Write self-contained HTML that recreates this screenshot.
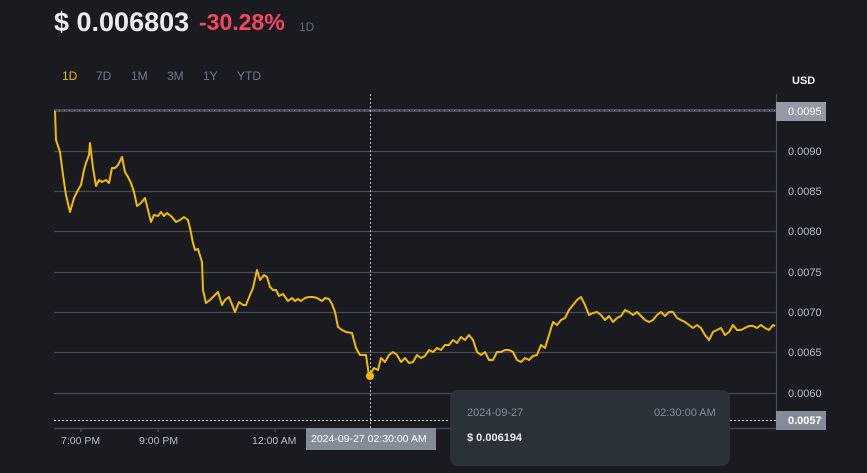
<!DOCTYPE html>
<html><head><style>
body{margin:0;width:867px;height:473px;background:#1a1b20;overflow:hidden;font-family:"Liberation Sans",sans-serif;position:relative}
.t{position:absolute;white-space:nowrap}
</style></head><body>
<div class="t" style="left:54px;top:7px;font-size:27px;font-weight:bold;color:#eaecef">$ 0.006803</div>
<div class="t" style="left:199px;top:9px;font-size:23px;font-weight:bold;color:#f6465d">-30.28%</div>
<div class="t" style="left:299px;top:20px;font-size:12px;color:#5e6673">1D</div>
<div class="t" style="left:62px;top:69px;font-size:12px;color:#f0b90b">1D</div>
<div class="t" style="left:96px;top:69px;font-size:12px;color:#707a8a">7D</div>
<div class="t" style="left:131px;top:69px;font-size:12px;color:#707a8a">1M</div>
<div class="t" style="left:167px;top:69px;font-size:12px;color:#707a8a">3M</div>
<div class="t" style="left:203px;top:69px;font-size:12px;color:#707a8a">1Y</div>
<div class="t" style="left:237px;top:69px;font-size:12px;color:#707a8a">YTD</div>
<div class="t" style="left:792px;top:75px;font-size:11px;font-weight:bold;color:#eaecef">USD</div>
<svg width="867" height="473" style="position:absolute;left:0;top:0">
<g stroke="#474d57" stroke-width="1.2">
<line x1="54" y1="151.5" x2="776" y2="151.5"/><line x1="54" y1="191.5" x2="776" y2="191.5"/>
<line x1="54" y1="231.5" x2="776" y2="231.5"/><line x1="54" y1="272.5" x2="776" y2="272.5"/>
<line x1="54" y1="312.5" x2="776" y2="312.5"/><line x1="54" y1="352.5" x2="776" y2="352.5"/>
<line x1="54" y1="393.5" x2="776" y2="393.5"/><line x1="54" y1="428.5" x2="776" y2="428.5"/>
<line x1="776.5" y1="94" x2="776.5" y2="428"/>
<line x1="81" y1="428" x2="81" y2="432"/><line x1="158" y1="428" x2="158" y2="432"/><line x1="275" y1="428" x2="275" y2="432"/>
</g>
<rect x="54" y="109" width="722" height="3" fill="#4a4d55"/>
<line x1="54" y1="110.5" x2="776" y2="110.5" stroke="#8a8f99" stroke-width="1" stroke-dasharray="1 4"/>
<line x1="54" y1="420.5" x2="776" y2="420.5" stroke="#d0d4dc" stroke-width="1" stroke-dasharray="2 2"/>
<line x1="370.5" y1="94" x2="370.5" y2="428" stroke="#b7bdc6" stroke-width="1" stroke-dasharray="2 2"/>
<polyline fill="none" stroke="#f0b90b" stroke-width="2" stroke-linejoin="round" points="55,111 56,140 60,152 63,175 66,195 70,212 74,198 78,190 81,185 84,170 86,163 89,155 90,143 93,168 96,186 99,180 102,182 106,180 109,183 112,168 115,168 118,165 122,157 125,172 128,177 131,183 134,192 137,206 141,203 145,198 148,210 151,222 154,215 158,216 161,212 164,216 167,213 172,217 176,222 180,220 184,217 188,220 190,228 193,243 195,250 198,249 202,262 203,290 206,303 210,300 214,296 218,292 222,305 225,300 229,297 235,312 239,302 243,305 246,305 250,295 253,288 257,270 260,280 264,275 267,277 270,287 273,290 276,290 279,296 283,294 288,301 292,298 295,301 298,299 301,301 305,298 309,297 313,297 317,298 322,301 325,298 329,299 332,304 335,312 338,327 342,330 346,332 352,333 356,348 360,355 366,355 369,376 374,368 378,370 381,358 385,362 389,355 393,352 397,355 401,362 405,358 409,363 413,362 417,355 421,358 425,356 429,350 433,352 437,348 441,350 445,345 449,345 453,340 457,343 461,337 465,340 469,335 473,340 477,352 481,355 485,352 489,360 493,360 497,352 501,352 505,350 509,350 513,352 517,360 521,362 525,358 529,360 533,356 537,355 541,345 545,348 549,335 553,322 557,325 561,320 565,318 569,310 573,305 577,300 581,297 585,305 589,315 593,313 597,312 601,315 605,320 609,316 613,322 617,318 621,316 625,310 629,312 633,315 637,312 641,316 645,320 649,322 653,320 657,315 661,312 665,316 669,312 673,312 677,318 681,320 685,322 689,325 693,328 697,325 701,328 705,335 709,340 713,332 717,330 721,328 725,335 729,332 733,325 737,330 741,330 745,328 749,326 753,326 757,328 761,325 765,328 769,330 773,325 775,326"/>
<circle cx="370" cy="376" r="4" fill="#f0b90b"/>
<rect x="776" y="102" width="50" height="19" fill="#959ba6"/>
<rect x="776" y="411" width="50" height="19" fill="#858c99"/>
<rect x="306" y="428" width="130" height="22" fill="#858c99"/>
</svg>
<div class="t" style="left:788px;top:106px;font-size:11px;color:#fff">0.0095</div>
<div class="t" style="left:788px;top:415px;font-size:11px;font-weight:bold;color:#fff">0.0057</div>
<div class="t" style="left:788px;top:146px;font-size:11px;color:#b7bdc6">0.0090</div>
<div class="t" style="left:788px;top:186px;font-size:11px;color:#b7bdc6">0.0085</div>
<div class="t" style="left:788px;top:226px;font-size:11px;color:#b7bdc6">0.0080</div>
<div class="t" style="left:788px;top:267px;font-size:11px;color:#b7bdc6">0.0075</div>
<div class="t" style="left:788px;top:307px;font-size:11px;color:#b7bdc6">0.0070</div>
<div class="t" style="left:788px;top:347px;font-size:11px;color:#b7bdc6">0.0065</div>
<div class="t" style="left:788px;top:388px;font-size:11px;color:#b7bdc6">0.0060</div>
<div class="t" style="left:61px;top:435px;font-size:10.5px;color:#b7bdc6">7:00 PM</div>
<div class="t" style="left:139px;top:435px;font-size:10.5px;color:#b7bdc6">9:00 PM</div>
<div class="t" style="left:252px;top:435px;font-size:10.5px;color:#b7bdc6">12:00 AM</div>
<div class="t" style="left:311px;top:433px;font-size:10.5px;color:#fff">2024-09-27 02:30:00 AM</div>
<div style="position:absolute;left:450px;top:390px;width:280px;height:76px;background:#2b3139;border-radius:8px"></div>
<div class="t" style="left:467px;top:407px;font-size:11px;color:#848e9c">2024-09-27</div>
<div class="t" style="left:654px;top:407px;font-size:11px;color:#848e9c">02:30:00 AM</div>
<div class="t" style="left:467px;top:432px;font-size:11px;font-weight:bold;color:#eaecef">$ 0.006194</div>
</body></html>
